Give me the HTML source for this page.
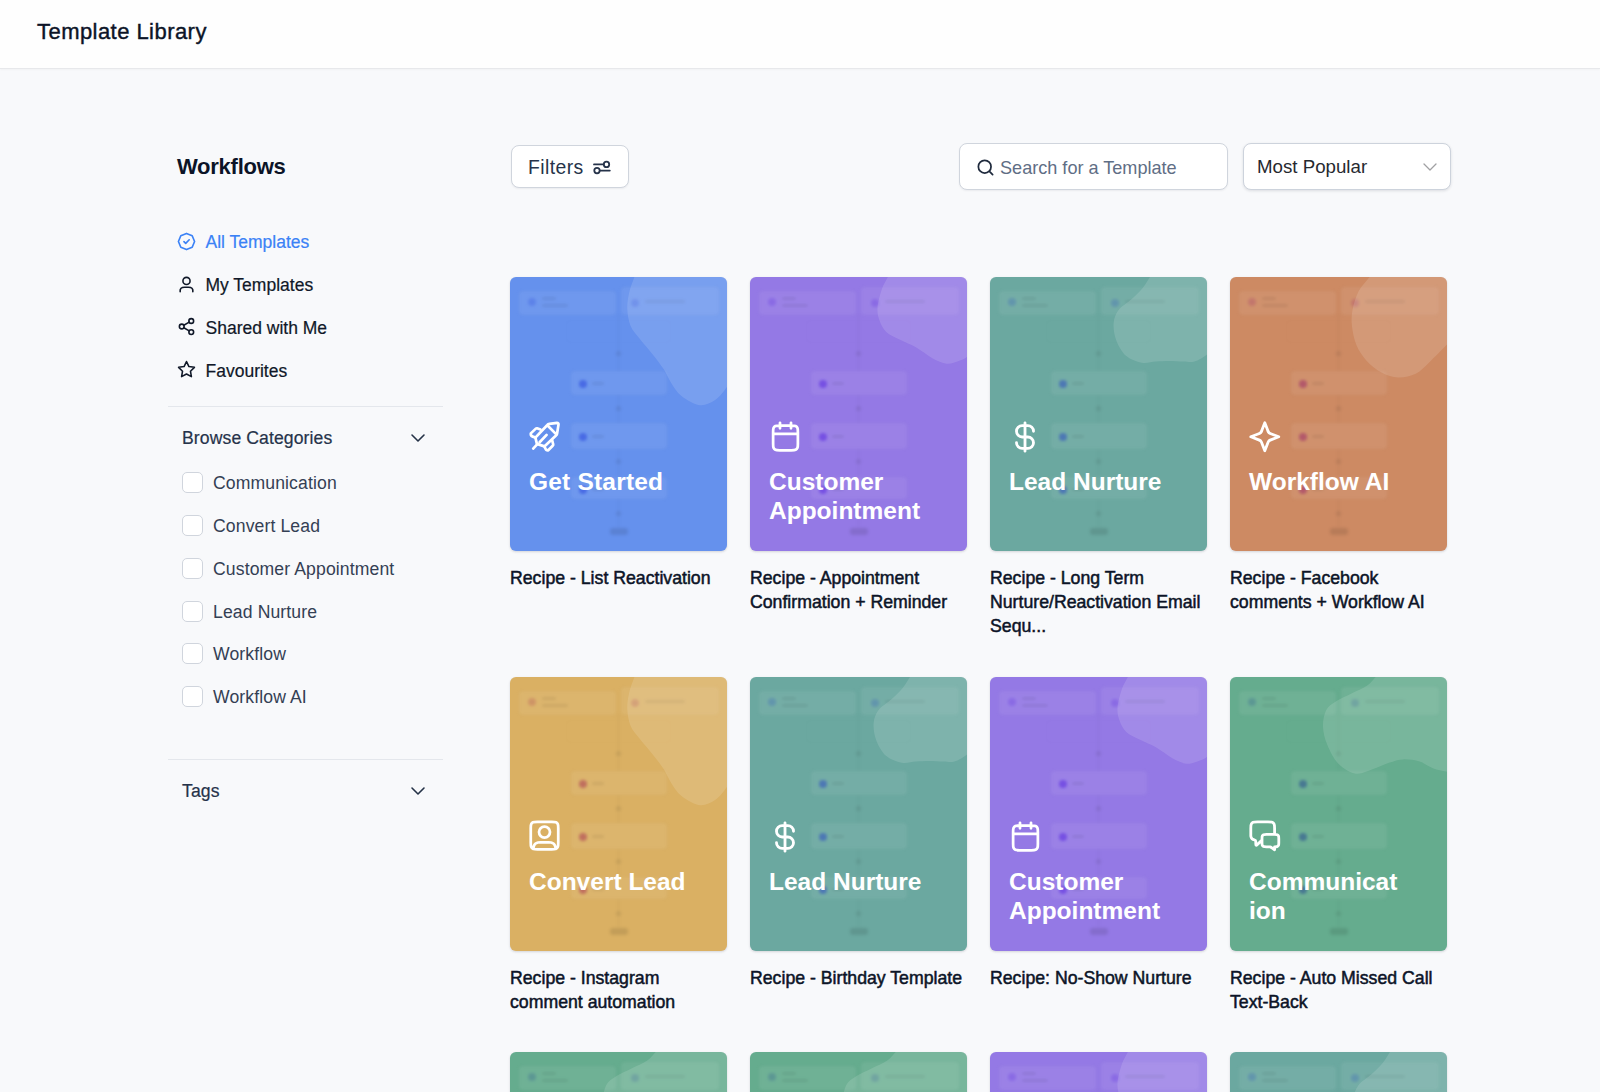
<!DOCTYPE html>
<html><head><meta charset="utf-8">
<style>
*{box-sizing:border-box;margin:0;padding:0}
html,body{width:1600px;height:1092px;overflow:hidden}
body{background:#f8f9fb;font-family:"Liberation Sans",sans-serif;position:relative;color:#101828}
.abs{position:absolute}
.hdr{left:0;top:0;width:1600px;height:69.3px;background:#fefefe;border-bottom:1px solid #e7e8eb;box-shadow:0 1px 2px rgba(16,24,40,.03)}
.hdr .t{position:absolute;left:37px;top:18px;font-size:22px;letter-spacing:.45px;line-height:28px;color:#0c1427;white-space:nowrap;-webkit-text-stroke:0.4px #0c1427}
.wf{left:177px;top:152.5px;font-size:22px;line-height:28px;font-weight:700;letter-spacing:-0.25px;color:#0c1427;white-space:nowrap}
.mi{position:absolute;left:177px;height:24px;width:250px}
.mi svg{position:absolute;left:0;top:2.3px}
.mi span{position:absolute;left:28.5px;top:0.8px;font-size:17.5px;line-height:24px;white-space:nowrap;color:#101828;-webkit-text-stroke:0.2px currentColor}
.div{position:absolute;left:168px;width:275px;height:1px;background:#e4e7ec}
.sec{position:absolute;left:182px;font-size:17.6px;letter-spacing:.1px;line-height:24px;color:#26334a;white-space:nowrap;-webkit-text-stroke:0.2px #26334a}
.chev{position:absolute;left:409px}
.cb{position:absolute;left:182px;width:21px;height:21px;border:1px solid #d0d5dd;border-radius:5px;background:#fff}
.cbl{position:absolute;left:213px;font-size:17.6px;letter-spacing:.12px;line-height:24px;color:#344054;white-space:nowrap}
.btn{position:absolute;background:#fff;border:1px solid #d0d5dd;border-radius:8px;box-shadow:0 1px 2px rgba(16,24,40,.06)}
.card{position:absolute;width:217px;height:274px;border-radius:6px;overflow:hidden;box-shadow:0 1px 3px rgba(16,24,40,.10),0 1px 2px rgba(16,24,40,.06)}
.card .blob{position:absolute;left:0;top:0}
.card .ic{position:absolute;left:19px;top:144px}
.card .ct{position:absolute;left:19px;top:191px;width:200px;font-size:24.5px;line-height:28.7px;font-weight:700;color:#fff}
.ttl{position:absolute;width:222px;font-size:17.7px;line-height:24px;color:#0c1427;-webkit-text-stroke:0.5px #0c1427}
.wfbg{position:absolute;left:0;top:0;width:217px;height:274px;filter:blur(1.7px)}
.wfbg i{position:absolute;display:block}
.wfbg .bx{background:rgba(255,255,255,.065);box-shadow:0 0 2px rgba(0,0,0,.07);border-radius:4px}
.wfbg .bx.f{background:rgba(255,255,255,.0);box-shadow:0 0 2px rgba(0,0,0,.04)}
.wfbg .dt{width:8px;height:8px;border-radius:50%;background:var(--dot);opacity:.75}
.wfbg .dt.s{opacity:.35}
.wfbg .ln{height:3px;border-radius:2px;background:rgba(0,0,0,.07)}
.wfbg .vl{width:1px;background:rgba(0,0,0,.05)}
.wfbg .pl{width:5px;height:5px;border-radius:50%;background:rgba(0,0,0,.08)}
.wfbg .en{width:18px;height:7px;border-radius:3px;background:rgba(0,0,0,.10)}
</style></head>
<body>
<div class="abs hdr"><div class="t">Template Library</div></div>

<div class="abs wf">Workflows</div>

<div class="mi" style="top:229px"><svg style="top:2.8px" width="19" height="19" viewBox="0 0 24 24" fill="none" stroke="#3b82f6" stroke-width="2.1" stroke-linecap="round" stroke-linejoin="round"><path d="M12 1.8 L19.2 4.8 L22.2 12 L19.2 19.2 L12 22.2 L4.8 19.2 L1.8 12 L4.8 4.8 Z"/><path d="m8.8 12.2 2.2 2.2 4.4-4.6"/></svg><span style="color:#3b82f6">All Templates</span></div>
<div class="mi" style="top:272px"><svg style="top:2.9px" width="19" height="19" viewBox="0 0 24 24" fill="none" stroke="#101828" stroke-width="2" stroke-linecap="round" stroke-linejoin="round"><path d="M20 21c0-1.4 0-2.1-.17-2.66a4 4 0 0 0-2.67-2.67C16.6 15.5 15.9 15.5 14.5 15.5h-5c-1.4 0-2.1 0-2.66.17a4 4 0 0 0-2.67 2.67C4 18.9 4 19.6 4 21"/><circle cx="12" cy="7.5" r="4.5"/></svg><span>My Templates</span></div>
<div class="mi" style="top:315px"><svg width="19" height="19" viewBox="0 0 24 24" fill="none" stroke="#101828" stroke-width="2" stroke-linecap="round" stroke-linejoin="round"><circle cx="18" cy="5" r="3"/><circle cx="6" cy="12" r="3"/><circle cx="18" cy="19" r="3"/><line x1="8.59" y1="13.51" x2="15.42" y2="17.49"/><line x1="15.41" y1="6.51" x2="8.59" y2="10.49"/></svg><span>Shared with Me</span></div>
<div class="mi" style="top:358px"><svg width="19" height="19" viewBox="0 0 24 24" fill="none" stroke="#101828" stroke-width="2" stroke-linecap="round" stroke-linejoin="round"><polygon points="12 2 15.09 8.26 22 9.27 17 14.14 18.18 21.02 12 17.77 5.82 21.02 7 14.14 2 9.27 8.91 8.26 12 2"/></svg><span>Favourites</span></div>
<div class="div" style="top:406px"></div>
<div class="sec" style="top:426px">Browse Categories</div>
<svg class="chev" style="top:425.5px;left:405.8px" width="24" height="24" viewBox="0 0 24 24" fill="none" stroke="#253247" stroke-width="1.6" stroke-linecap="round" stroke-linejoin="round"><path d="m6 9 6 6 6-6"/></svg>
<div class="cb" style="top:472px"></div><div class="cbl" style="top:471px">Communication</div>
<div class="cb" style="top:515px"></div><div class="cbl" style="top:514px">Convert Lead</div>
<div class="cb" style="top:558px"></div><div class="cbl" style="top:557px">Customer Appointment</div>
<div class="cb" style="top:601px"></div><div class="cbl" style="top:600px">Lead Nurture</div>
<div class="cb" style="top:643px"></div><div class="cbl" style="top:642px">Workflow</div>
<div class="cb" style="top:686px"></div><div class="cbl" style="top:685px">Workflow AI</div>
<div class="div" style="top:759px"></div>
<div class="sec" style="top:779px">Tags</div>
<svg class="chev" style="top:778.5px;left:405.8px" width="24" height="24" viewBox="0 0 24 24" fill="none" stroke="#253247" stroke-width="1.6" stroke-linecap="round" stroke-linejoin="round"><path d="m6 9 6 6 6-6"/></svg>


<div class="btn" style="left:511px;top:145px;width:118px;height:43px"></div>
<div class="abs" style="left:528px;top:154.5px;font-size:19.4px;line-height:24px;color:#26334a;white-space:nowrap;letter-spacing:.4px">Filters</div>
<svg class="abs" style="left:591px;top:157px" width="21" height="21" viewBox="0 0 21 21" fill="none" stroke="#26334a" stroke-width="1.8" stroke-linecap="round"><path d="M3 7.4h9.6"/><circle cx="15.5" cy="7.4" r="2.7"/><path d="M18.8 13.6H9.1"/><circle cx="6" cy="13.6" r="2.7"/></svg>
<div class="btn" style="left:959px;top:143px;width:269px;height:47px"></div>
<svg class="abs" style="left:976px;top:157.8px" width="19" height="19" viewBox="0 0 24 24" fill="none" stroke="#1f2a3d" stroke-width="2.2" stroke-linecap="round"><path d="M21 21l-4.35-4.35M19 11a8 8 0 1 1-16 0 8 8 0 0 1 16 0Z"/></svg>
<div class="abs" style="left:1000px;top:156px;font-size:18.1px;line-height:24px;color:#5f6e85;white-space:nowrap">Search for a Template</div>
<div class="btn" style="left:1242.5px;top:143px;width:208.5px;height:47px;border-color:#cdd3dc;box-shadow:0 1px 3px rgba(16,24,40,.12)"></div>
<div class="abs" style="left:1257px;top:154.8px;font-size:18.7px;line-height:24px;color:#26292f;white-space:nowrap">Most Popular</div>
<svg class="abs" style="left:1418px;top:154.8px" width="24" height="24" viewBox="0 0 24 24" fill="none" stroke="#a0a0a3" stroke-width="1.3" stroke-linecap="round" stroke-linejoin="round"><path d="m6 9 6 6 6-6"/></svg>
<!--CARDS-->
<div class="card" style="left:510px;top:277px;background:#6591ed"><div class="wfbg" style="--dot:#3b5be0"><i class="bx" style="left:9px;top:14px;width:97px;height:24px"></i><i class="dt s" style="left:18px;top:21px"></i><i class="ln" style="left:32px;top:20px;width:14px"></i><i class="ln" style="left:32px;top:27px;width:26px"></i><i class="bx" style="left:111px;top:10px;width:98px;height:28px"></i><i class="dt s" style="left:121px;top:22px"></i><i class="ln" style="left:135px;top:23px;width:40px"></i><i class="bx f" style="left:57px;top:44px;width:103px;height:21px"></i><i class="vl" style="left:108px;top:37px;height:57px"></i><i class="pl" style="left:106px;top:74px"></i><i class="bx" style="left:61px;top:94px;width:96px;height:24px"></i><i class="dt" style="left:69px;top:103px"></i><i class="ln" style="left:82px;top:105px;width:12px"></i><i class="vl" style="left:108px;top:118px;height:28px"></i><i class="pl" style="left:106px;top:129px"></i><i class="bx" style="left:61px;top:146px;width:96px;height:26px"></i><i class="dt" style="left:69px;top:156px"></i><i class="ln" style="left:82px;top:158px;width:12px"></i><i class="vl" style="left:108px;top:172px;height:28px"></i><i class="pl" style="left:106px;top:182px"></i><i class="bx" style="left:61px;top:200px;width:96px;height:22px"></i><i class="dt" style="left:69px;top:209px"></i><i class="ln" style="left:82px;top:211px;width:12px"></i><i class="vl" style="left:108px;top:222px;height:28px"></i><i class="pl" style="left:106px;top:234px"></i><i class="en" style="left:100px;top:251px"></i></div><svg class="blob" width="217" height="273" viewBox="0 0 217 273"><path d="M129.6,-15.4 C128.7,-12.8 126.1,-5.1 124.4,0.0 C122.7,5.1 120.4,10.1 119.2,15.4 C118.0,20.7 117.1,26.4 117.3,32.0 C117.5,37.5 118.5,43.8 120.5,48.7 C122.5,53.6 125.9,56.8 129.5,61.5 C133.1,66.2 138.2,71.8 142.3,76.9 C146.4,82.0 150.6,87.4 153.8,92.3 C157.0,97.2 158.5,101.9 161.5,106.4 C164.5,110.9 167.1,115.6 171.8,119.2 C176.5,122.8 184.1,127.5 189.7,128.2 C195.2,128.8 200.6,126.1 205.1,123.1 C209.6,120.1 213.9,114.1 216.7,110.3 C219.5,106.5 221.1,101.7 222.0,100.0 L230,100.0 L230,-20 L129.6,-20 Z" fill="#fff" fill-opacity="0.13"/></svg><svg class="ic" width="42" height="42" viewBox="0 0 42 42" style="left:14px;top:139px" fill="none" stroke="#fff" stroke-width="2.7" stroke-linecap="round" stroke-linejoin="round"><path d="M12.9 27.9 L11.4 21.6 L23.1 9.2 Q24 8.2 25.5 7.9 L33 6.8 Q34.7 6.8 34.5 8.6 L33 18 Q32.8 18.9 32 19.6 L20.4 30.4 Z"/><path d="M23.8 9.8 L32.3 18.4"/><path d="M22.6 18.9 L15.6 26.3"/><path d="M16.5 13.6 L13 12.3 Q12.4 12.2 11.8 12.6 L6.8 17.4 Q6.5 19.9 8.7 20.6 L11 21.4"/><path d="M28.3 24.7 L29.2 28.4 Q29.3 29.2 28.7 29.7 L24.2 34.3 Q22 34.5 21.3 32.3 L20.3 30.3"/><path d="M9.2 32.6 L12.9 28.6"/></svg><div class="ct" style="letter-spacing:.2px">Get Started</div></div>
<div class="ttl" style="left:510px;top:566px">Recipe - List Reactivation</div>
<div class="card" style="left:750px;top:277px;background:#9479e5"><div class="wfbg" style="--dot:#6a3fe0"><i class="bx" style="left:9px;top:14px;width:97px;height:24px"></i><i class="dt s" style="left:18px;top:21px"></i><i class="ln" style="left:32px;top:20px;width:14px"></i><i class="ln" style="left:32px;top:27px;width:26px"></i><i class="bx" style="left:111px;top:10px;width:98px;height:28px"></i><i class="dt s" style="left:121px;top:22px"></i><i class="ln" style="left:135px;top:23px;width:40px"></i><i class="bx f" style="left:57px;top:44px;width:103px;height:21px"></i><i class="vl" style="left:108px;top:37px;height:57px"></i><i class="pl" style="left:106px;top:74px"></i><i class="bx" style="left:61px;top:94px;width:96px;height:24px"></i><i class="dt" style="left:69px;top:103px"></i><i class="ln" style="left:82px;top:105px;width:12px"></i><i class="vl" style="left:108px;top:118px;height:28px"></i><i class="pl" style="left:106px;top:129px"></i><i class="bx" style="left:61px;top:146px;width:96px;height:26px"></i><i class="dt" style="left:69px;top:156px"></i><i class="ln" style="left:82px;top:158px;width:12px"></i><i class="vl" style="left:108px;top:172px;height:28px"></i><i class="pl" style="left:106px;top:182px"></i><i class="bx" style="left:61px;top:200px;width:96px;height:22px"></i><i class="dt" style="left:69px;top:209px"></i><i class="ln" style="left:82px;top:211px;width:12px"></i><i class="vl" style="left:108px;top:222px;height:28px"></i><i class="pl" style="left:106px;top:234px"></i><i class="en" style="left:100px;top:251px"></i></div><svg class="blob" width="217" height="273" viewBox="0 0 217 273"><path d="M143.9,-12.1 C142.9,-10.1 139.9,-4.0 137.9,0.0 C135.9,4.0 133.6,7.0 131.9,12.1 C130.2,17.2 127.9,25.5 127.5,30.8 C127.1,36.1 128.2,40.0 129.7,44.0 C131.2,48.0 133.0,51.8 136.3,54.9 C139.6,58.0 144.6,60.0 149.5,62.6 C154.4,65.2 160.4,67.2 165.9,70.3 C171.4,73.4 177.3,78.5 182.4,81.3 C187.5,84.0 192.1,86.4 196.7,86.8 C201.3,87.2 206.6,84.6 209.9,83.5 C213.2,82.4 214.5,81.5 216.5,80.2 C218.5,79.0 221.1,76.7 222.0,76.0 L230,76.0 L230,-20 L143.9,-20 Z" fill="#fff" fill-opacity="0.13"/></svg><svg class="ic" width="33" height="33" viewBox="0 0 24 24" style="left:18.5px;top:142.8px" fill="none" stroke="#fff" stroke-width="2" stroke-linecap="round" stroke-linejoin="round"><path d="M21 10H3M16 2v4M8 2v4M7.8 22h8.4c1.68 0 2.52 0 3.162-.327a3 3 0 0 0 1.311-1.311C21 19.72 21 18.88 21 17.2V8.8c0-1.68 0-2.52-.327-3.162a3 3 0 0 0-1.311-1.311C18.72 4 17.88 4 16.2 4H7.8c-1.68 0-2.52 0-3.162.327a3 3 0 0 0-1.311 1.311C3 6.28 3 7.12 3 8.8v8.4c0 1.68 0 2.52.327 3.162a3 3 0 0 0 1.311 1.311C5.28 22 6.12 22 7.8 22Z"/></svg><div class="ct">Customer<br>Appointment</div></div>
<div class="ttl" style="left:750px;top:566px">Recipe - Appointment Confirmation + Reminder</div>
<div class="card" style="left:990px;top:277px;background:#6ba8a0"><div class="wfbg" style="--dot:#3f66b8"><i class="bx" style="left:9px;top:14px;width:97px;height:24px"></i><i class="dt s" style="left:18px;top:21px"></i><i class="ln" style="left:32px;top:20px;width:14px"></i><i class="ln" style="left:32px;top:27px;width:26px"></i><i class="bx" style="left:111px;top:10px;width:98px;height:28px"></i><i class="dt s" style="left:121px;top:22px"></i><i class="ln" style="left:135px;top:23px;width:40px"></i><i class="bx f" style="left:57px;top:44px;width:103px;height:21px"></i><i class="vl" style="left:108px;top:37px;height:57px"></i><i class="pl" style="left:106px;top:74px"></i><i class="bx" style="left:61px;top:94px;width:96px;height:24px"></i><i class="dt" style="left:69px;top:103px"></i><i class="ln" style="left:82px;top:105px;width:12px"></i><i class="vl" style="left:108px;top:118px;height:28px"></i><i class="pl" style="left:106px;top:129px"></i><i class="bx" style="left:61px;top:146px;width:96px;height:26px"></i><i class="dt" style="left:69px;top:156px"></i><i class="ln" style="left:82px;top:158px;width:12px"></i><i class="vl" style="left:108px;top:172px;height:28px"></i><i class="pl" style="left:106px;top:182px"></i><i class="bx" style="left:61px;top:200px;width:96px;height:22px"></i><i class="dt" style="left:69px;top:209px"></i><i class="ln" style="left:82px;top:211px;width:12px"></i><i class="vl" style="left:108px;top:222px;height:28px"></i><i class="pl" style="left:106px;top:234px"></i><i class="en" style="left:100px;top:251px"></i></div><svg class="blob" width="217" height="273" viewBox="0 0 217 273"><path d="M167.1,-11.0 C165.9,-9.2 162.3,-3.7 159.9,0.0 C157.5,3.7 155.7,7.3 152.7,11.0 C149.7,14.7 145.8,18.3 141.8,22.0 C137.8,25.7 131.6,29.0 128.6,33.0 C125.6,37.0 124.0,41.1 123.6,46.2 C123.2,51.3 124.3,58.2 126.4,63.7 C128.5,69.2 132.1,75.4 136.3,79.1 C140.5,82.8 146.7,84.8 151.6,85.7 C156.5,86.6 161.3,84.9 165.9,84.6 C170.5,84.3 174.5,84.1 179.1,84.1 C183.7,84.1 189.2,84.5 193.4,84.6 C197.6,84.7 200.6,85.7 204.4,84.6 C208.2,83.5 213.6,80.1 216.5,78.0 C219.4,75.9 221.1,73.0 222.0,72.0 L230,72.0 L230,-20 L167.1,-20 Z" fill="#fff" fill-opacity="0.13"/></svg><svg class="ic" width="34" height="34" viewBox="0 0 24 24" style="left:18.4px;top:142.6px" fill="none" stroke="#fff" stroke-width="2" stroke-linecap="round" stroke-linejoin="round"><path d="M6 16a4 4 0 0 0 4 4h4a4 4 0 0 0 0-8h-4a4 4 0 0 1 0-8h4a4 4 0 0 1 4 4M12 2v20"/></svg><div class="ct">Lead Nurture</div></div>
<div class="ttl" style="left:990px;top:566px">Recipe - Long Term Nurture/Reactivation Email Sequ...</div>
<div class="card" style="left:1230px;top:277px;background:#cd8a63"><div class="wfbg" style="--dot:#a8456a"><i class="bx" style="left:9px;top:14px;width:97px;height:24px"></i><i class="dt s" style="left:18px;top:21px"></i><i class="ln" style="left:32px;top:20px;width:14px"></i><i class="ln" style="left:32px;top:27px;width:26px"></i><i class="bx" style="left:111px;top:10px;width:98px;height:28px"></i><i class="dt s" style="left:121px;top:22px"></i><i class="ln" style="left:135px;top:23px;width:40px"></i><i class="bx f" style="left:57px;top:44px;width:103px;height:21px"></i><i class="vl" style="left:108px;top:37px;height:57px"></i><i class="pl" style="left:106px;top:74px"></i><i class="bx" style="left:61px;top:94px;width:96px;height:24px"></i><i class="dt" style="left:69px;top:103px"></i><i class="ln" style="left:82px;top:105px;width:12px"></i><i class="vl" style="left:108px;top:118px;height:28px"></i><i class="pl" style="left:106px;top:129px"></i><i class="bx" style="left:61px;top:146px;width:96px;height:26px"></i><i class="dt" style="left:69px;top:156px"></i><i class="ln" style="left:82px;top:158px;width:12px"></i><i class="vl" style="left:108px;top:172px;height:28px"></i><i class="pl" style="left:106px;top:182px"></i><i class="bx" style="left:61px;top:200px;width:96px;height:22px"></i><i class="dt" style="left:69px;top:209px"></i><i class="ln" style="left:82px;top:211px;width:12px"></i><i class="vl" style="left:108px;top:222px;height:28px"></i><i class="pl" style="left:106px;top:234px"></i><i class="en" style="left:100px;top:251px"></i></div><svg class="blob" width="217" height="273" viewBox="0 0 217 273"><path d="M150.6,-14.3 C148.8,-11.9 143.3,-4.8 139.6,0.0 C135.9,4.8 131.4,8.8 128.6,14.3 C125.8,19.8 123.6,27.1 122.5,33.0 C121.4,38.9 121.3,43.6 122.0,49.5 C122.7,55.4 124.0,62.4 126.4,68.1 C128.8,73.8 132.1,78.9 136.3,83.5 C140.5,88.1 146.3,92.8 151.6,95.6 C156.9,98.4 162.4,100.3 168.1,100.5 C173.8,100.7 180.6,99.2 185.7,96.7 C190.8,94.2 193.8,90.5 198.9,85.7 C204.0,80.9 212.7,72.0 216.5,68.1 C220.3,64.1 221.1,63.0 222.0,62.0 L230,62.0 L230,-20 L150.6,-20 Z" fill="#fff" fill-opacity="0.13"/></svg><svg class="ic" width="33.6" height="33.6" viewBox="0 0 24 24" style="left:18px;top:142.6px" fill="none" stroke="#fff" stroke-width="2" stroke-linecap="round" stroke-linejoin="round"><path d="M12 2l2.012 5.231c.282.733.423 1.1.642 1.408.195.274.433.512.707.707.308.219.675.36 1.408.642L22 12l-5.231 2.012c-.733.282-1.1.423-1.408.642a3 3 0 0 0-.707.707c-.219.308-.36.675-.642 1.408L12 22l-2.012-5.231c-.282-.733-.423-1.1-.642-1.408a3 3 0 0 0-.707-.707c-.308-.219-.675-.36-1.408-.642L2 12l5.231-2.012c.733-.282 1.1-.423 1.408-.642a3 3 0 0 0 .707-.707c.219-.308.36-.675.642-1.408L12 2Z"/></svg><div class="ct">Workflow AI</div></div>
<div class="ttl" style="left:1230px;top:566px">Recipe - Facebook comments + Workflow AI</div>
<div class="card" style="left:510px;top:677px;background:#dab063"><div class="wfbg" style="--dot:#b5585a"><i class="bx" style="left:9px;top:14px;width:97px;height:24px"></i><i class="dt s" style="left:18px;top:21px"></i><i class="ln" style="left:32px;top:20px;width:14px"></i><i class="ln" style="left:32px;top:27px;width:26px"></i><i class="bx" style="left:111px;top:10px;width:98px;height:28px"></i><i class="dt s" style="left:121px;top:22px"></i><i class="ln" style="left:135px;top:23px;width:40px"></i><i class="bx f" style="left:57px;top:44px;width:103px;height:21px"></i><i class="vl" style="left:108px;top:37px;height:57px"></i><i class="pl" style="left:106px;top:74px"></i><i class="bx" style="left:61px;top:94px;width:96px;height:24px"></i><i class="dt" style="left:69px;top:103px"></i><i class="ln" style="left:82px;top:105px;width:12px"></i><i class="vl" style="left:108px;top:118px;height:28px"></i><i class="pl" style="left:106px;top:129px"></i><i class="bx" style="left:61px;top:146px;width:96px;height:26px"></i><i class="dt" style="left:69px;top:156px"></i><i class="ln" style="left:82px;top:158px;width:12px"></i><i class="vl" style="left:108px;top:172px;height:28px"></i><i class="pl" style="left:106px;top:182px"></i><i class="bx" style="left:61px;top:200px;width:96px;height:22px"></i><i class="dt" style="left:69px;top:209px"></i><i class="ln" style="left:82px;top:211px;width:12px"></i><i class="vl" style="left:108px;top:222px;height:28px"></i><i class="pl" style="left:106px;top:234px"></i><i class="en" style="left:100px;top:251px"></i></div><svg class="blob" width="217" height="273" viewBox="0 0 217 273"><path d="M129.6,-15.4 C128.7,-12.8 126.1,-5.1 124.4,0.0 C122.7,5.1 120.4,10.1 119.2,15.4 C118.0,20.7 117.1,26.4 117.3,32.0 C117.5,37.5 118.5,43.8 120.5,48.7 C122.5,53.6 125.9,56.8 129.5,61.5 C133.1,66.2 138.2,71.8 142.3,76.9 C146.4,82.0 150.6,87.4 153.8,92.3 C157.0,97.2 158.5,101.9 161.5,106.4 C164.5,110.9 167.1,115.6 171.8,119.2 C176.5,122.8 184.1,127.5 189.7,128.2 C195.2,128.8 200.6,126.1 205.1,123.1 C209.6,120.1 213.9,114.1 216.7,110.3 C219.5,106.5 221.1,101.7 222.0,100.0 L230,100.0 L230,-20 L129.6,-20 Z" fill="#fff" fill-opacity="0.13"/></svg><svg class="ic" width="33" height="33" viewBox="0 0 24 24" style="left:18.1px;top:142.4px" fill="none" stroke="#fff" stroke-width="2" stroke-linecap="round" stroke-linejoin="round"><path d="M4 21.817C4.603 22 5.416 22 6.8 22h10.4c1.384 0 2.197 0 2.8-.183M4 21.817a2.3 2.3 0 0 1-.362-.144 3 3 0 0 1-1.311-1.311C2 19.72 2 18.88 2 17.2V6.8c0-1.68 0-2.52.327-3.162a3 3 0 0 1 1.311-1.311C4.28 2 5.12 2 6.8 2h10.4c1.68 0 2.52 0 3.162.327a3 3 0 0 1 1.311 1.311C22 4.28 22 5.12 22 6.8v10.4c0 1.68 0 2.52-.327 3.162a3 3 0 0 1-1.311 1.311 2.3 2.3 0 0 1-.362.144M4 21.817c0-.809.005-1.237.077-1.597a4 4 0 0 1 3.143-3.143C7.606 17 8.07 17 9 17h6c.93 0 1.394 0 1.78.077a4 4 0 0 1 3.143 3.143c.072.36.077.788.077 1.597M16 9.5a4 4 0 1 1-8 0 4 4 0 0 1 8 0Z"/></svg><div class="ct">Convert Lead</div></div>
<div class="ttl" style="left:510px;top:966px">Recipe - Instagram comment automation</div>
<div class="card" style="left:750px;top:677px;background:#6ba8a0"><div class="wfbg" style="--dot:#3f66b8"><i class="bx" style="left:9px;top:14px;width:97px;height:24px"></i><i class="dt s" style="left:18px;top:21px"></i><i class="ln" style="left:32px;top:20px;width:14px"></i><i class="ln" style="left:32px;top:27px;width:26px"></i><i class="bx" style="left:111px;top:10px;width:98px;height:28px"></i><i class="dt s" style="left:121px;top:22px"></i><i class="ln" style="left:135px;top:23px;width:40px"></i><i class="bx f" style="left:57px;top:44px;width:103px;height:21px"></i><i class="vl" style="left:108px;top:37px;height:57px"></i><i class="pl" style="left:106px;top:74px"></i><i class="bx" style="left:61px;top:94px;width:96px;height:24px"></i><i class="dt" style="left:69px;top:103px"></i><i class="ln" style="left:82px;top:105px;width:12px"></i><i class="vl" style="left:108px;top:118px;height:28px"></i><i class="pl" style="left:106px;top:129px"></i><i class="bx" style="left:61px;top:146px;width:96px;height:26px"></i><i class="dt" style="left:69px;top:156px"></i><i class="ln" style="left:82px;top:158px;width:12px"></i><i class="vl" style="left:108px;top:172px;height:28px"></i><i class="pl" style="left:106px;top:182px"></i><i class="bx" style="left:61px;top:200px;width:96px;height:22px"></i><i class="dt" style="left:69px;top:209px"></i><i class="ln" style="left:82px;top:211px;width:12px"></i><i class="vl" style="left:108px;top:222px;height:28px"></i><i class="pl" style="left:106px;top:234px"></i><i class="en" style="left:100px;top:251px"></i></div><svg class="blob" width="217" height="273" viewBox="0 0 217 273"><path d="M167.1,-11.0 C165.9,-9.2 162.3,-3.7 159.9,0.0 C157.5,3.7 155.7,7.3 152.7,11.0 C149.7,14.7 145.8,18.3 141.8,22.0 C137.8,25.7 131.6,29.0 128.6,33.0 C125.6,37.0 124.0,41.1 123.6,46.2 C123.2,51.3 124.3,58.2 126.4,63.7 C128.5,69.2 132.1,75.4 136.3,79.1 C140.5,82.8 146.7,84.8 151.6,85.7 C156.5,86.6 161.3,84.9 165.9,84.6 C170.5,84.3 174.5,84.1 179.1,84.1 C183.7,84.1 189.2,84.5 193.4,84.6 C197.6,84.7 200.6,85.7 204.4,84.6 C208.2,83.5 213.6,80.1 216.5,78.0 C219.4,75.9 221.1,73.0 222.0,72.0 L230,72.0 L230,-20 L167.1,-20 Z" fill="#fff" fill-opacity="0.13"/></svg><svg class="ic" width="34" height="34" viewBox="0 0 24 24" style="left:18.4px;top:142.6px" fill="none" stroke="#fff" stroke-width="2" stroke-linecap="round" stroke-linejoin="round"><path d="M6 16a4 4 0 0 0 4 4h4a4 4 0 0 0 0-8h-4a4 4 0 0 1 0-8h4a4 4 0 0 1 4 4M12 2v20"/></svg><div class="ct">Lead Nurture</div></div>
<div class="ttl" style="left:750px;top:966px">Recipe - Birthday Template</div>
<div class="card" style="left:990px;top:677px;background:#9479e5"><div class="wfbg" style="--dot:#6a3fe0"><i class="bx" style="left:9px;top:14px;width:97px;height:24px"></i><i class="dt s" style="left:18px;top:21px"></i><i class="ln" style="left:32px;top:20px;width:14px"></i><i class="ln" style="left:32px;top:27px;width:26px"></i><i class="bx" style="left:111px;top:10px;width:98px;height:28px"></i><i class="dt s" style="left:121px;top:22px"></i><i class="ln" style="left:135px;top:23px;width:40px"></i><i class="bx f" style="left:57px;top:44px;width:103px;height:21px"></i><i class="vl" style="left:108px;top:37px;height:57px"></i><i class="pl" style="left:106px;top:74px"></i><i class="bx" style="left:61px;top:94px;width:96px;height:24px"></i><i class="dt" style="left:69px;top:103px"></i><i class="ln" style="left:82px;top:105px;width:12px"></i><i class="vl" style="left:108px;top:118px;height:28px"></i><i class="pl" style="left:106px;top:129px"></i><i class="bx" style="left:61px;top:146px;width:96px;height:26px"></i><i class="dt" style="left:69px;top:156px"></i><i class="ln" style="left:82px;top:158px;width:12px"></i><i class="vl" style="left:108px;top:172px;height:28px"></i><i class="pl" style="left:106px;top:182px"></i><i class="bx" style="left:61px;top:200px;width:96px;height:22px"></i><i class="dt" style="left:69px;top:209px"></i><i class="ln" style="left:82px;top:211px;width:12px"></i><i class="vl" style="left:108px;top:222px;height:28px"></i><i class="pl" style="left:106px;top:234px"></i><i class="en" style="left:100px;top:251px"></i></div><svg class="blob" width="217" height="273" viewBox="0 0 217 273"><path d="M143.9,-12.1 C142.9,-10.1 139.9,-4.0 137.9,0.0 C135.9,4.0 133.6,7.0 131.9,12.1 C130.2,17.2 127.9,25.5 127.5,30.8 C127.1,36.1 128.2,40.0 129.7,44.0 C131.2,48.0 133.0,51.8 136.3,54.9 C139.6,58.0 144.6,60.0 149.5,62.6 C154.4,65.2 160.4,67.2 165.9,70.3 C171.4,73.4 177.3,78.5 182.4,81.3 C187.5,84.0 192.1,86.4 196.7,86.8 C201.3,87.2 206.6,84.6 209.9,83.5 C213.2,82.4 214.5,81.5 216.5,80.2 C218.5,79.0 221.1,76.7 222.0,76.0 L230,76.0 L230,-20 L143.9,-20 Z" fill="#fff" fill-opacity="0.13"/></svg><svg class="ic" width="33" height="33" viewBox="0 0 24 24" style="left:18.5px;top:142.8px" fill="none" stroke="#fff" stroke-width="2" stroke-linecap="round" stroke-linejoin="round"><path d="M21 10H3M16 2v4M8 2v4M7.8 22h8.4c1.68 0 2.52 0 3.162-.327a3 3 0 0 0 1.311-1.311C21 19.72 21 18.88 21 17.2V8.8c0-1.68 0-2.52-.327-3.162a3 3 0 0 0-1.311-1.311C18.72 4 17.88 4 16.2 4H7.8c-1.68 0-2.52 0-3.162.327a3 3 0 0 0-1.311 1.311C3 6.28 3 7.12 3 8.8v8.4c0 1.68 0 2.52.327 3.162a3 3 0 0 0 1.311 1.311C5.28 22 6.12 22 7.8 22Z"/></svg><div class="ct">Customer<br>Appointment</div></div>
<div class="ttl" style="left:990px;top:966px">Recipe: No-Show Nurture</div>
<div class="card" style="left:1230px;top:677px;background:#65ac8e"><div class="wfbg" style="--dot:#3a6690"><i class="bx" style="left:9px;top:14px;width:97px;height:24px"></i><i class="dt s" style="left:18px;top:21px"></i><i class="ln" style="left:32px;top:20px;width:14px"></i><i class="ln" style="left:32px;top:27px;width:26px"></i><i class="bx" style="left:111px;top:10px;width:98px;height:28px"></i><i class="dt s" style="left:121px;top:22px"></i><i class="ln" style="left:135px;top:23px;width:40px"></i><i class="bx f" style="left:57px;top:44px;width:103px;height:21px"></i><i class="vl" style="left:108px;top:37px;height:57px"></i><i class="pl" style="left:106px;top:74px"></i><i class="bx" style="left:61px;top:94px;width:96px;height:24px"></i><i class="dt" style="left:69px;top:103px"></i><i class="ln" style="left:82px;top:105px;width:12px"></i><i class="vl" style="left:108px;top:118px;height:28px"></i><i class="pl" style="left:106px;top:129px"></i><i class="bx" style="left:61px;top:146px;width:96px;height:26px"></i><i class="dt" style="left:69px;top:156px"></i><i class="ln" style="left:82px;top:158px;width:12px"></i><i class="vl" style="left:108px;top:172px;height:28px"></i><i class="pl" style="left:106px;top:182px"></i><i class="bx" style="left:61px;top:200px;width:96px;height:22px"></i><i class="dt" style="left:69px;top:209px"></i><i class="ln" style="left:82px;top:211px;width:12px"></i><i class="vl" style="left:108px;top:222px;height:28px"></i><i class="pl" style="left:106px;top:234px"></i><i class="en" style="left:100px;top:251px"></i></div><svg class="blob" width="217" height="273" viewBox="0 0 217 273"><path d="M154.5,-8.8 C153.0,-7.3 148.6,-2.9 145.7,0.0 C142.8,2.9 140.9,6.1 136.9,8.8 C132.9,11.6 126.6,13.9 121.5,16.5 C116.4,19.1 110.4,21.4 106.2,24.2 C102.0,26.9 98.5,28.8 96.3,33.0 C94.1,37.2 92.8,43.6 93.0,49.5 C93.2,55.4 94.8,61.9 97.4,68.1 C100.0,74.3 103.7,82.0 108.4,86.8 C113.2,91.6 120.2,95.8 125.9,96.7 C131.6,97.6 136.9,94.1 142.4,92.3 C147.9,90.5 153.8,87.3 158.9,85.7 C164.0,84.1 168.1,82.6 173.2,82.4 C178.3,82.2 184.8,83.1 189.7,84.6 C194.6,86.1 198.5,89.5 202.9,91.2 C207.3,92.9 212.8,93.9 216.0,94.5 C219.2,95.1 221.0,94.9 222.0,95.0 L230,95.0 L230,-20 L154.5,-20 Z" fill="#fff" fill-opacity="0.13"/></svg><svg class="ic" width="33.6" height="33.6" viewBox="0 0 24 24" style="left:17.8px;top:142.1px" fill="none" stroke="#fff" stroke-width="2" stroke-linecap="round" stroke-linejoin="round"><path d="M10 15l-3.075 3.114c-.43.434-.644.651-.828.667a.5.5 0 0 1-.421-.173c-.12-.14-.12-.446-.12-1.056v-1.56c0-.548-.449-.944-.99-1.024a3 3 0 0 1-2.534-2.533C2 12.219 2 11.96 2 11.444V6.8c0-1.68 0-2.52.327-3.162a3 3 0 0 1 1.311-1.311C4.28 2 5.12 2 6.8 2h7.4c1.68 0 2.52 0 3.162.327a3 3 0 0 1 1.311 1.311C19 4.28 19 5.12 19 6.8V11m0 11l-2.176-1.513c-.306-.213-.46-.32-.626-.395a2 2 0 0 0-.462-.145c-.18-.033-.367-.033-.74-.033H13.2c-1.12 0-1.68 0-2.108-.218a2 2 0 0 1-.874-.874C10 18.394 10 17.834 10 16.714V14.2c0-1.12 0-1.68.218-2.108a2 2 0 0 1 .874-.874C11.52 11 12.08 11 13.2 11h5.6c1.12 0 1.68 0 2.108.218a2 2 0 0 1 .874.874C22 12.52 22 13.08 22 14.2v2.714c0 .932 0 1.398-.152 1.766a2 2 0 0 1-1.083 1.082c-.367.152-.833.152-1.765.152V22Z"/></svg><div class="ct">Communicat<br>ion</div></div>
<div class="ttl" style="left:1230px;top:966px">Recipe - Auto Missed Call Text-Back</div>
<div class="card" style="left:510px;top:1052px;background:#65ac8e"><div class="wfbg" style="--dot:#3a6690"><i class="bx" style="left:9px;top:14px;width:97px;height:24px"></i><i class="dt s" style="left:18px;top:21px"></i><i class="ln" style="left:32px;top:20px;width:14px"></i><i class="ln" style="left:32px;top:27px;width:26px"></i><i class="bx" style="left:111px;top:10px;width:98px;height:28px"></i><i class="dt s" style="left:121px;top:22px"></i><i class="ln" style="left:135px;top:23px;width:40px"></i><i class="bx f" style="left:57px;top:44px;width:103px;height:21px"></i><i class="vl" style="left:108px;top:37px;height:57px"></i><i class="pl" style="left:106px;top:74px"></i><i class="bx" style="left:61px;top:94px;width:96px;height:24px"></i><i class="dt" style="left:69px;top:103px"></i><i class="ln" style="left:82px;top:105px;width:12px"></i><i class="vl" style="left:108px;top:118px;height:28px"></i><i class="pl" style="left:106px;top:129px"></i><i class="bx" style="left:61px;top:146px;width:96px;height:26px"></i><i class="dt" style="left:69px;top:156px"></i><i class="ln" style="left:82px;top:158px;width:12px"></i><i class="vl" style="left:108px;top:172px;height:28px"></i><i class="pl" style="left:106px;top:182px"></i><i class="bx" style="left:61px;top:200px;width:96px;height:22px"></i><i class="dt" style="left:69px;top:209px"></i><i class="ln" style="left:82px;top:211px;width:12px"></i><i class="vl" style="left:108px;top:222px;height:28px"></i><i class="pl" style="left:106px;top:234px"></i><i class="en" style="left:100px;top:251px"></i></div><svg class="blob" width="217" height="273" viewBox="0 0 217 273"><path d="M154.5,-8.8 C153.0,-7.3 148.6,-2.9 145.7,0.0 C142.8,2.9 140.9,6.1 136.9,8.8 C132.9,11.6 126.6,13.9 121.5,16.5 C116.4,19.1 110.4,21.4 106.2,24.2 C102.0,26.9 98.5,28.8 96.3,33.0 C94.1,37.2 92.8,43.6 93.0,49.5 C93.2,55.4 94.8,61.9 97.4,68.1 C100.0,74.3 103.7,82.0 108.4,86.8 C113.2,91.6 120.2,95.8 125.9,96.7 C131.6,97.6 136.9,94.1 142.4,92.3 C147.9,90.5 153.8,87.3 158.9,85.7 C164.0,84.1 168.1,82.6 173.2,82.4 C178.3,82.2 184.8,83.1 189.7,84.6 C194.6,86.1 198.5,89.5 202.9,91.2 C207.3,92.9 212.8,93.9 216.0,94.5 C219.2,95.1 221.0,94.9 222.0,95.0 L230,95.0 L230,-20 L154.5,-20 Z" fill="#fff" fill-opacity="0.13"/></svg></div>
<div class="card" style="left:750px;top:1052px;background:#65ac8e"><div class="wfbg" style="--dot:#3a6690"><i class="bx" style="left:9px;top:14px;width:97px;height:24px"></i><i class="dt s" style="left:18px;top:21px"></i><i class="ln" style="left:32px;top:20px;width:14px"></i><i class="ln" style="left:32px;top:27px;width:26px"></i><i class="bx" style="left:111px;top:10px;width:98px;height:28px"></i><i class="dt s" style="left:121px;top:22px"></i><i class="ln" style="left:135px;top:23px;width:40px"></i><i class="bx f" style="left:57px;top:44px;width:103px;height:21px"></i><i class="vl" style="left:108px;top:37px;height:57px"></i><i class="pl" style="left:106px;top:74px"></i><i class="bx" style="left:61px;top:94px;width:96px;height:24px"></i><i class="dt" style="left:69px;top:103px"></i><i class="ln" style="left:82px;top:105px;width:12px"></i><i class="vl" style="left:108px;top:118px;height:28px"></i><i class="pl" style="left:106px;top:129px"></i><i class="bx" style="left:61px;top:146px;width:96px;height:26px"></i><i class="dt" style="left:69px;top:156px"></i><i class="ln" style="left:82px;top:158px;width:12px"></i><i class="vl" style="left:108px;top:172px;height:28px"></i><i class="pl" style="left:106px;top:182px"></i><i class="bx" style="left:61px;top:200px;width:96px;height:22px"></i><i class="dt" style="left:69px;top:209px"></i><i class="ln" style="left:82px;top:211px;width:12px"></i><i class="vl" style="left:108px;top:222px;height:28px"></i><i class="pl" style="left:106px;top:234px"></i><i class="en" style="left:100px;top:251px"></i></div><svg class="blob" width="217" height="273" viewBox="0 0 217 273"><path d="M154.5,-8.8 C153.0,-7.3 148.6,-2.9 145.7,0.0 C142.8,2.9 140.9,6.1 136.9,8.8 C132.9,11.6 126.6,13.9 121.5,16.5 C116.4,19.1 110.4,21.4 106.2,24.2 C102.0,26.9 98.5,28.8 96.3,33.0 C94.1,37.2 92.8,43.6 93.0,49.5 C93.2,55.4 94.8,61.9 97.4,68.1 C100.0,74.3 103.7,82.0 108.4,86.8 C113.2,91.6 120.2,95.8 125.9,96.7 C131.6,97.6 136.9,94.1 142.4,92.3 C147.9,90.5 153.8,87.3 158.9,85.7 C164.0,84.1 168.1,82.6 173.2,82.4 C178.3,82.2 184.8,83.1 189.7,84.6 C194.6,86.1 198.5,89.5 202.9,91.2 C207.3,92.9 212.8,93.9 216.0,94.5 C219.2,95.1 221.0,94.9 222.0,95.0 L230,95.0 L230,-20 L154.5,-20 Z" fill="#fff" fill-opacity="0.13"/></svg></div>
<div class="card" style="left:990px;top:1052px;background:#9479e5"><div class="wfbg" style="--dot:#6a3fe0"><i class="bx" style="left:9px;top:14px;width:97px;height:24px"></i><i class="dt s" style="left:18px;top:21px"></i><i class="ln" style="left:32px;top:20px;width:14px"></i><i class="ln" style="left:32px;top:27px;width:26px"></i><i class="bx" style="left:111px;top:10px;width:98px;height:28px"></i><i class="dt s" style="left:121px;top:22px"></i><i class="ln" style="left:135px;top:23px;width:40px"></i><i class="bx f" style="left:57px;top:44px;width:103px;height:21px"></i><i class="vl" style="left:108px;top:37px;height:57px"></i><i class="pl" style="left:106px;top:74px"></i><i class="bx" style="left:61px;top:94px;width:96px;height:24px"></i><i class="dt" style="left:69px;top:103px"></i><i class="ln" style="left:82px;top:105px;width:12px"></i><i class="vl" style="left:108px;top:118px;height:28px"></i><i class="pl" style="left:106px;top:129px"></i><i class="bx" style="left:61px;top:146px;width:96px;height:26px"></i><i class="dt" style="left:69px;top:156px"></i><i class="ln" style="left:82px;top:158px;width:12px"></i><i class="vl" style="left:108px;top:172px;height:28px"></i><i class="pl" style="left:106px;top:182px"></i><i class="bx" style="left:61px;top:200px;width:96px;height:22px"></i><i class="dt" style="left:69px;top:209px"></i><i class="ln" style="left:82px;top:211px;width:12px"></i><i class="vl" style="left:108px;top:222px;height:28px"></i><i class="pl" style="left:106px;top:234px"></i><i class="en" style="left:100px;top:251px"></i></div><svg class="blob" width="217" height="273" viewBox="0 0 217 273"><path d="M143.9,-12.1 C142.9,-10.1 139.9,-4.0 137.9,0.0 C135.9,4.0 133.6,7.0 131.9,12.1 C130.2,17.2 127.9,25.5 127.5,30.8 C127.1,36.1 128.2,40.0 129.7,44.0 C131.2,48.0 133.0,51.8 136.3,54.9 C139.6,58.0 144.6,60.0 149.5,62.6 C154.4,65.2 160.4,67.2 165.9,70.3 C171.4,73.4 177.3,78.5 182.4,81.3 C187.5,84.0 192.1,86.4 196.7,86.8 C201.3,87.2 206.6,84.6 209.9,83.5 C213.2,82.4 214.5,81.5 216.5,80.2 C218.5,79.0 221.1,76.7 222.0,76.0 L230,76.0 L230,-20 L143.9,-20 Z" fill="#fff" fill-opacity="0.13"/></svg></div>
<div class="card" style="left:1230px;top:1052px;background:#6ba8a0"><div class="wfbg" style="--dot:#3f66b8"><i class="bx" style="left:9px;top:14px;width:97px;height:24px"></i><i class="dt s" style="left:18px;top:21px"></i><i class="ln" style="left:32px;top:20px;width:14px"></i><i class="ln" style="left:32px;top:27px;width:26px"></i><i class="bx" style="left:111px;top:10px;width:98px;height:28px"></i><i class="dt s" style="left:121px;top:22px"></i><i class="ln" style="left:135px;top:23px;width:40px"></i><i class="bx f" style="left:57px;top:44px;width:103px;height:21px"></i><i class="vl" style="left:108px;top:37px;height:57px"></i><i class="pl" style="left:106px;top:74px"></i><i class="bx" style="left:61px;top:94px;width:96px;height:24px"></i><i class="dt" style="left:69px;top:103px"></i><i class="ln" style="left:82px;top:105px;width:12px"></i><i class="vl" style="left:108px;top:118px;height:28px"></i><i class="pl" style="left:106px;top:129px"></i><i class="bx" style="left:61px;top:146px;width:96px;height:26px"></i><i class="dt" style="left:69px;top:156px"></i><i class="ln" style="left:82px;top:158px;width:12px"></i><i class="vl" style="left:108px;top:172px;height:28px"></i><i class="pl" style="left:106px;top:182px"></i><i class="bx" style="left:61px;top:200px;width:96px;height:22px"></i><i class="dt" style="left:69px;top:209px"></i><i class="ln" style="left:82px;top:211px;width:12px"></i><i class="vl" style="left:108px;top:222px;height:28px"></i><i class="pl" style="left:106px;top:234px"></i><i class="en" style="left:100px;top:251px"></i></div><svg class="blob" width="217" height="273" viewBox="0 0 217 273"><path d="M167.1,-11.0 C165.9,-9.2 162.3,-3.7 159.9,0.0 C157.5,3.7 155.7,7.3 152.7,11.0 C149.7,14.7 145.8,18.3 141.8,22.0 C137.8,25.7 131.6,29.0 128.6,33.0 C125.6,37.0 124.0,41.1 123.6,46.2 C123.2,51.3 124.3,58.2 126.4,63.7 C128.5,69.2 132.1,75.4 136.3,79.1 C140.5,82.8 146.7,84.8 151.6,85.7 C156.5,86.6 161.3,84.9 165.9,84.6 C170.5,84.3 174.5,84.1 179.1,84.1 C183.7,84.1 189.2,84.5 193.4,84.6 C197.6,84.7 200.6,85.7 204.4,84.6 C208.2,83.5 213.6,80.1 216.5,78.0 C219.4,75.9 221.1,73.0 222.0,72.0 L230,72.0 L230,-20 L167.1,-20 Z" fill="#fff" fill-opacity="0.13"/></svg></div>
<!--/CARDS-->
</body></html>
